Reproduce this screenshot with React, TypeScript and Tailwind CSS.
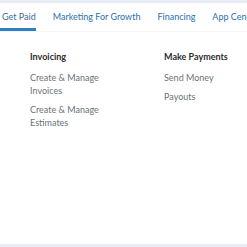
import React from 'react';

const TABS = ['Get Paid', 'Marketing For Growth', 'Financing', 'App Center'];

const COLUMNS = [
  { title: 'Invoicing', links: ['Create & Manage Invoices', 'Create & Manage Estimates'] },
  { title: 'Make Payments', links: ['Send Money', 'Payouts'] },
];

export default function App() {
  return (
    <div className="w-[247px] h-[247px] overflow-hidden bg-white flex flex-col font-['Lato',sans-serif]">
      <div className="h-[3px] bg-[#e8edf5] shrink-0" />

      {/* tab bar */}
      <div className="flex gap-[17px] pl-[2px] h-[29px] border-b border-[#f2f4f7] whitespace-nowrap shrink-0">
        {TABS.map((t, i) => (
          <div
            key={t}
            className={`flex items-center shrink-0 text-[9px] ${i === 0 ? '-ml-[2px] pl-[2px] text-[#3a6c9c] border-b-[3px] border-[#2f7fc4] pt-[3px]' : 'text-[#2a6fb0]'}`}
          >
            {t}
          </div>
        ))}
      </div>

      {/* mega menu */}
      <div className="flex-1 flex pl-[30px] pt-[18px]">
        {COLUMNS.map((c) => (
          <div key={c.title} className="w-[134px] shrink-0 flex flex-col">
            <div className="text-[9px] font-bold text-[#2c2e2f] leading-[13px] mb-[8px]">{c.title}</div>
            {c.links.map((l) => (
              <div key={l} className="text-[9px] text-[#6c7378] leading-[13px] w-[74px] mb-[6px]">
                {l}
              </div>
            ))}
          </div>
        ))}
      </div>

      <div className="h-[3px] bg-[#e8edf5] shrink-0" />
    </div>
  );
}
